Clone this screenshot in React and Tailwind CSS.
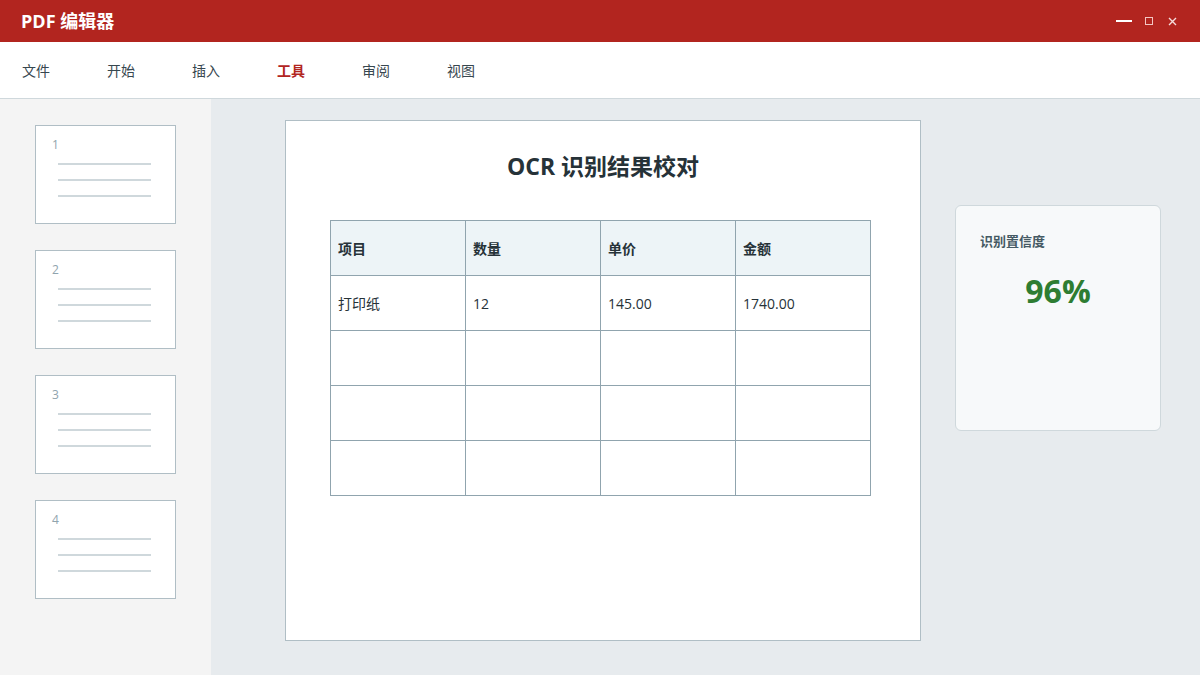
import React from "react";

const FONT = { fontFamily: '"Open Sans", "Noto Sans CJK SC", sans-serif' };

const menus = ["文件", "开始", "插入", "工具", "审阅", "视图"];
const rows = [
  ["打印纸", "12", "145.00", "1740.00"],
  ["", "", "", ""],
  ["", "", "", ""],
  ["", "", "", ""],
];

const Thumb = ({ n }) => (
  <div className="w-[141px] h-[99px] bg-white border border-[#b0bec5] pt-[11px] pl-[16px]">
    <div className="text-[12px] leading-[16px] text-[#90a4ae]">{n}</div>
    <div className="mt-[10px] ml-[6px] flex flex-col gap-[14px]">
      <div className="w-[93px] h-[2px] bg-[#cfd8dc]" />
      <div className="w-[93px] h-[2px] bg-[#cfd8dc]" />
      <div className="w-[93px] h-[2px] bg-[#cfd8dc]" />
    </div>
  </div>
);

export default function App() {
  return (
    <div className="w-[1200px] h-[675px] flex flex-col overflow-hidden" style={FONT}>
      <div className="h-[42px] bg-[#b2251f] flex items-center justify-between pl-[21px] pr-[20px] shrink-0">
        <div className="text-white font-bold text-[18px]">PDF 编辑器</div>
        <div className="flex items-center text-white">
          <div className="w-[16px] h-[1.5px] bg-white mr-[13px]" />
          <div className="w-[8px] h-[8px] border border-[#f3c5c2] mr-[15px]" />
          <svg width="9" height="9" viewBox="0 0 9 9" className="mr-[3px]">
            <path d="M1 1L8 8M8 1L1 8" stroke="#f6dcdb" strokeWidth="1.4" />
          </svg>
        </div>
      </div>
      <div className="h-[57px] bg-white border-b border-[#cfd8dc] flex items-center pl-[22px] shrink-0">
        {menus.map((m) => (
          <div
            key={m}
            className={`w-[85px] text-[14px] ${m === "工具" ? "text-[#b2251f] font-bold" : "text-[#37474f]"}`}
          >
            {m}
          </div>
        ))}
      </div>
      <div className="flex flex-1 min-h-0">
        <div className="w-[211px] bg-[#f4f4f4] flex flex-col gap-[26px] pt-[26px] pl-[35px] shrink-0">
          {[1, 2, 3, 4].map((n) => (
            <Thumb key={n} n={n} />
          ))}
        </div>
        <div className="flex-1 bg-[#e7ebee] flex pt-[21px] pl-[74px]">
          <div className="w-[636px] h-[521px] bg-white border border-[#b0bec5] flex flex-col pt-[28px]">
            <div className="text-center text-[23px] font-bold text-[#263238] leading-[34px]">OCR 识别结果校对</div>
            <table className="self-start table-fixed w-[541px] mt-[37px] ml-[44px] border-collapse text-[14px] text-[#263238]">
              <thead>
                <tr className="bg-[#edf4f7]">
                  {["项目", "数量", "单价", "金额"].map((h) => (
                    <th key={h} className="w-[135px] h-[55px] border border-[#90a4ae] text-left font-bold px-[7px]">
                      {h}
                    </th>
                  ))}
                </tr>
              </thead>
              <tbody>
                {rows.map((r, i) => (
                  <tr key={i}>
                    {r.map((c, j) => (
                      <td key={j} className="h-[55px] border border-[#90a4ae] px-[7px]">
                        {c}
                      </td>
                    ))}
                  </tr>
                ))}
              </tbody>
            </table>
          </div>
          <div className="ml-[34px] mt-[85px] w-[206px] h-[226px] bg-[#f7f9fa] border border-[#cfd8dc] rounded-[6px] pt-[26px] px-[24px]">
            <div className="text-[13px] font-bold text-[#455a64]">识别置信度</div>
            <div className="mt-[17px] text-center text-[32px] font-bold text-[#2e7d32] leading-[44px]">96%</div>
          </div>
        </div>
      </div>
    </div>
  );
}
